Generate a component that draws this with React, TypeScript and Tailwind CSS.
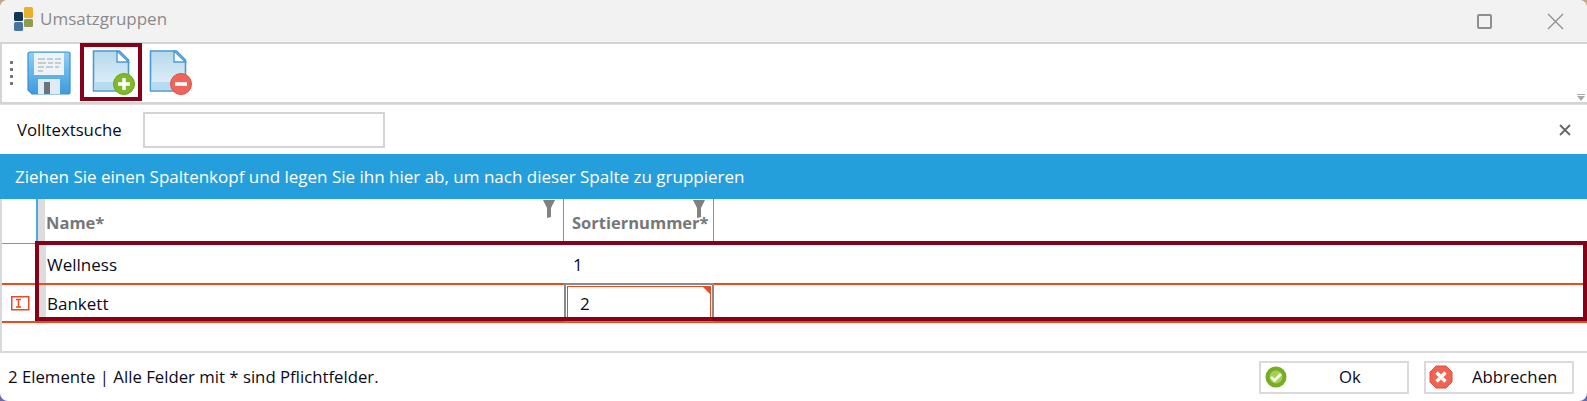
const FONT = "font-['Open_Sans','Noto_Sans',sans-serif]";

function AppLogo() {
  return (
    <svg width="21" height="25" viewBox="0 0 21 25" className="shrink-0">
      <rect x="0" y="5" width="9" height="9" rx="1.5" fill="#12355b" />
      <rect x="10" y="0" width="9" height="11" rx="1.5" fill="#e9b02b" />
      <rect x="0" y="15" width="9" height="9" rx="1.5" fill="#46769f" />
      <rect x="10" y="12" width="9" height="8" rx="1.5" fill="#8f9c4e" />
    </svg>
  );
}

function SaveIcon() {
  return (
    <svg width="44" height="44" viewBox="0 0 44 44" className="shrink-0">
      <defs>
        <linearGradient id="saveBody" x1="0" y1="0" x2="0" y2="1">
          <stop offset="0" stopColor="#8fd0f4" />
          <stop offset="1" stopColor="#3d9ade" />
        </linearGradient>
      </defs>
      <path d="M3 1h38a2 2 0 0 1 2 2v38a2 2 0 0 1-2 2H5l-4-4V3a2 2 0 0 1 2-2z" fill="url(#saveBody)" stroke="#3b8fd0" strokeWidth="1.2" />
      <rect x="7" y="2" width="30" height="22" fill="#eef3f7" />
      <path d="M11 8h7M20 8h6M28 8h6M11 12h8M21 12h5M28 12h6M11 16h6M19 16h7M28 16h4M11 20h5" stroke="#9aa5af" strokeWidth="1.2" />
      <rect x="11" y="28" width="22" height="15" fill="#dfecf5" />
      <rect x="17" y="31" width="6" height="12" fill="#6a747d" />
    </svg>
  );
}

function PageIcon({ kind }: { kind: 'add' | 'remove' }) {
  const add = kind === 'add';
  const id = add ? 'pageAdd' : 'pageRemove';
  return (
    <svg width="44" height="46" viewBox="0 0 44 46" className="shrink-0">
      <defs>
        <linearGradient id={id} x1="0" y1="0" x2="0" y2="1">
          <stop offset="0" stopColor="#b5d9ec" />
          <stop offset="1" stopColor="#e6f2f9" />
        </linearGradient>
      </defs>
      <path d="M1.500 1h26l9 9v31h-35z" fill={`url(#${id})`} stroke="#4a9bd4" strokeWidth="1.6" />
      <path d="M2.500 32h33v8h-33z" fill="#b8dcef" />
      <path d="M25 1v11h11.500z" fill="#fff" stroke="#4a9bd4" strokeWidth="1.4" />
      <circle cx="32" cy="34" r="10.500" fill={add ? '#7fb927' : '#f0655a'} stroke={add ? '#6aa31a' : '#de5244'} />
      {add ? (
        <path d="M32 28v12M26 34h12" stroke="#fff" strokeWidth="3.4" />
      ) : (
        <path d="M26 34h12" stroke="#fff" strokeWidth="3.6" />
      )}
    </svg>
  );
}

function FilterIcon() {
  return (
    <svg width="12" height="18" viewBox="0 0 12 18" className="absolute right-[8px] top-[1px]">
      <path d="M0 0h12L8 8v9l-4 1V8z" fill="#808080" />
    </svg>
  );
}

function OkIcon() {
  return (
    <svg width="22" height="22" viewBox="0 0 22 22" className="shrink-0">
      <circle cx="11" cy="11" r="10.500" fill="#76ad21" />
      <circle cx="11" cy="11" r="6.500" fill="#a6cf5a" />
      <path d="M6 11l3.600 3.400L16 8" fill="none" stroke="#fff" strokeWidth="2.6" />
    </svg>
  );
}

function CancelIcon() {
  return (
    <svg width="24" height="24" viewBox="0 0 24 24" className="shrink-0">
      <path d="M7 1h10l6 6v10l-6 6H7l-6-6V7z" fill="#ee6352" stroke="#dc4f40" />
      <path d="M7.500 7.500l9 9M16.500 7.500l-9 9" stroke="#fff" strokeWidth="3.4" />
    </svg>
  );
}

function RowIndicator() {
  return (
    <svg width="19" height="15" viewBox="0 0 19 15">
      <rect x="0.75" y="0.75" width="17" height="13" fill="#fff" stroke="#e8492a" strokeWidth="1.5" />
      <path d="M5 3.500h5M5 11h5M7.500 3.500V11" stroke="#e8492a" strokeWidth="1.500" fill="none" />
    </svg>
  );
}

export default function App() {
  return (
    <div className="h-[401px] w-[1587px] overflow-hidden bg-[linear-gradient(#c9a58a,#6a68b4)]">
      <div className={`${FONT} relative flex h-full flex-col rounded-[8px] bg-white text-[#0b0b18]`}>

        {/* title bar */}
        <div className="flex h-[42px] items-center rounded-t-[8px] bg-[#f2f2f2] pb-[4px] pl-[14px]">
          <AppLogo />
          <span className="ml-[5px] text-[17px] text-[#8a8a8a]">Umsatzgruppen</span>
          <div className="ml-auto flex items-center pt-[4px]">
            <div className="mr-[55px] h-[15px] w-[15px] rounded-[2px] border-2 border-[#8f8f8f]" />
            <svg width="17" height="17" viewBox="0 0 17 17" className="mr-[23px]">
              <path d="M1 1l15 15M16 1L1 16" stroke="#8f8f8f" strokeWidth="1.3" />
            </svg>
          </div>
        </div>

        {/* toolbar */}
        <div className="relative flex h-[62px] items-center border-y-2 border-l-2 border-[#d4d4d4] bg-white">
          <div className="ml-[8px] flex w-[3px] flex-col gap-[4px]">
            <span className="h-[3px] w-[3px] bg-[#777]" />
            <span className="h-[3px] w-[3px] bg-[#777]" />
            <span className="h-[3px] w-[3px] bg-[#777]" />
            <span className="h-[3px] w-[3px] bg-[#777]" />
          </div>
          <div className="ml-[14px]"><SaveIcon /></div>
          <div className="ml-[21px]"><PageIcon kind="add" /></div>
          <div className="ml-[13px]"><PageIcon kind="remove" /></div>
          <div className="absolute bottom-[1px] right-[2px] flex flex-col items-center gap-[1px]">
            <span className="h-[1px] w-[8px] bg-[#aaa]" />
            <span className="h-0 w-0 border-x-[4px] border-t-[5px] border-x-transparent border-t-[#aaa]" />
          </div>
          <div className="absolute left-[78px] top-[-1px] h-[58px] w-[62px] border-4 border-[#850018]" />
        </div>

        {/* search row */}
        <div className="flex h-[50px] items-center border-t border-[#e4dfe2] pl-[17px]">
          <span className="w-[126px] text-[16.75px]">Volltextsuche</span>
          <div className="h-[36px] w-[242px] border-2 border-[#d4d4d4]" />
          <svg width="12" height="12" viewBox="0 0 12 12" className="ml-auto mr-[16px]">
            <path d="M1 1l10 10M11 1L1 11" stroke="#666" strokeWidth="1.800" />
          </svg>
        </div>

        {/* group panel */}
        <div className="flex h-[45px] items-center bg-[#259fdb] pl-[15px] text-[17px] text-white">
          Ziehen Sie einen Spaltenkopf und legen Sie ihn hier ab, um nach dieser Spalte zu gruppieren
        </div>

        {/* grid */}
        <div className="relative flex h-[154px] flex-col border-b-2 border-l-2 border-[#d9d9d9]">
          <div className="flex h-[45px]">
            <div className="w-[36px] border-b border-r-2 border-[#4aa8de]" />
            <div className="relative flex w-[526px] items-center border-l-[7px] border-r border-[#dcdcdc] border-r-[#4aa8de] pl-[1px] pt-[4px] text-[16.5px] font-bold text-[#777]">
              Name*
              <FilterIcon />
            </div>
            <div className="relative flex w-[150px] items-center border-r border-[#4aa8de] pl-[8px] pt-[4px] text-[16.5px] font-bold text-[#777]">
              Sortiernummer*
              <FilterIcon />
            </div>
          </div>

          <div className="flex h-[41px] border-b-2 border-[#ee4a1e]">
            <div className="w-[37px]" />
            <div className="flex w-[525px] items-center border-l-[7px] border-[#dcdcdc] pl-[1px] pt-[2px] text-[17px]">Wellness</div>
            <div className="flex w-[150px] items-center pl-[9px] pt-[2px] text-[17px]">1</div>
          </div>

          <div className="flex h-[38px] border-b-2 border-[#ee4a1e]">
            <div className="flex w-[37px] items-center pl-[9px]"><RowIndicator /></div>
            <div className="flex w-[525px] items-center border-l-[7px] border-[#dcdcdc] pl-[1px] pt-[2px] text-[17px]">Bankett</div>
            <div className="relative mt-[-2px] flex h-[39px] w-[150px] items-center border-2 border-[#8a8a8a] p-[1px]">
              <div className="flex h-full w-full items-center border border-[#ee4a1e] pl-[12px] pt-[2px] text-[17px]">2</div>
              <span className="absolute right-[2px] top-[2px] h-0 w-0 border-l-[7px] border-t-[7px] border-l-transparent border-t-[#e8492a]" />
            </div>
          </div>

          <div className="absolute left-[33px] right-0 top-[42px] h-[80px] border-4 border-[#850018]" />
        </div>

        {/* footer */}
        <div className="flex flex-1 items-center pl-[8px] text-[16.75px]">
          <span>2 Elemente | Alle Felder mit * sind Pflichtfelder.</span>
          <div className="ml-auto mr-[13px] flex gap-[15px]">
            <button className="flex h-[33px] w-[150px] items-center border-2 border-[#dadada] pl-[4px]">
              <OkIcon />
              <span className="ml-[52px]">Ok</span>
            </button>
            <button className="flex h-[33px] w-[150px] items-center border-2 border-[#dadada] pl-[3px]">
              <CancelIcon />
              <span className="ml-[19px]">Abbrechen</span>
            </button>
          </div>
        </div>
      </div>
    </div>
  );
}
